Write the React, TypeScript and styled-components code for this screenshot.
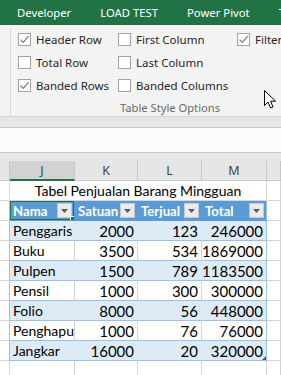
import React from "react";
import styled, { createGlobalStyle, css } from "styled-components";

const GlobalStyle = createGlobalStyle`
  html, body { margin: 0; padding: 0; }
  body {
    width: 281px;
    height: 375px;
    overflow: hidden;
    background: #ffffff;
    font-family: "Noto Sans", "Open Sans", sans-serif;
  }
  #root { position: relative; width: 281px; height: 375px; overflow: hidden; }
`;

const UI_FONT = `"Noto Sans", "Open Sans", sans-serif`;
const CELL_FONT = `Lato, "Liberation Sans", sans-serif`;

/* ---------- Tab bar ---------- */
const TabBar = styled.div`
  height: 25px;
  background: #217346;
  display: flex;
  align-items: center;
  padding-left: 17px;
  gap: 29px;
  white-space: nowrap;
  overflow: hidden;
`;

const Tab = styled.span`
  color: #ffffff;
  font-family: ${UI_FONT};
  font-size: 11.3px;
  line-height: 25px;
`;

/* ---------- Ribbon ---------- */
const Ribbon = styled.div`
  background: #f3f3f3;
  border-bottom: 1px solid #d2d2d2;
  display: flex;
  align-items: stretch;
  padding: 3px 0 0 10px;
  height: 88px;
  overflow: hidden;
`;

const Group = styled.div`
  width: 318px;
  flex: none;
  border-left: 1px solid #d6d6d6;
  margin-bottom: 1px;
  display: flex;
  flex-direction: column;
`;

const OptionGrid = styled.div`
  display: grid;
  grid-template-columns: 100px 119px 90px;
  grid-auto-rows: 23px;
  padding-left: 7px;
`;

const Option = styled.label`
  display: flex;
  align-items: center;
  gap: 5px;
  font-family: ${UI_FONT};
  font-size: 11.5px;
  color: #262626;
  white-space: nowrap;
`;

const Box = styled.span`
  width: 11px;
  height: 11px;
  border: 1px solid #a3a3a3;
  background: #ffffff;
  display: inline-flex;
  align-items: center;
  justify-content: center;
  flex: none;
`;

const GroupLabel = styled.div`
  margin-top: auto;
  text-align: center;
  font-family: ${UI_FONT};
  font-size: 11.2px;
  color: #6a6a6a;
  line-height: 15px;
`;

const Check = () => (
  <svg width="11" height="11" viewBox="0 0 11 11">
    <path d="M1.5 5.6 L4.3 8.4 L9.6 2.2" fill="none" stroke="#7a7a7a" strokeWidth="1.3" />
  </svg>
);

const CheckOption: React.FC<{ label: string; checked?: boolean }> = ({ label, checked }) => (
  <Option>
    <Box>{checked && <Check />}</Box>
    {label}
  </Option>
);

/* ---------- Below-ribbon bars ---------- */
const Band = styled.div`
  height: 10px;
  background: #e6e6e6;
  border-bottom: 1px solid #c6c6c6;
`;

const FormulaBar = styled.div`
  height: 24px;
  background: #fcfcfc;
  border-bottom: 1px solid #c6c6c6;
`;

const Gap = styled.div`
  height: 8px;
  background: #e6e6e6;
`;

/* ---------- Sheet ---------- */
const COLS = "10px 65px 63px 64px 65px 1fr";

const Row = styled.div`
  display: grid;
  grid-template-columns: ${COLS};
  height: 20px;
`;

const ColHead = styled.div<{ $selected?: boolean }>`
  box-sizing: border-box;
  height: 20px;
  background: ${(p) => (p.$selected ? "#d2d2d2" : "#e6e6e6")};
  border-right: 1px solid #c6c6c6;
  border-bottom: ${(p) => (p.$selected ? "2px solid #217346" : "1px solid #c6c6c6")};
  color: ${(p) => (p.$selected ? "#1e5e38" : "#444444")};
  font-family: ${UI_FONT};
  font-size: 12.5px;
  display: flex;
  align-items: center;
  justify-content: center;
`;

type Kind = "plain" | "band" | "white" | "head";

const Cell = styled.div<{ $kind?: Kind; $num?: boolean; $edge?: boolean }>`
  box-sizing: border-box;
  height: 20px;
  position: relative;
  font-family: ${CELL_FONT};
  font-size: ${(p) => (p.$num ? "15px" : "14px")};
  color: #000000;
  padding: 0 3px;
  display: flex;
  align-items: center;
  white-space: nowrap;
  overflow: hidden;
  border-right: 1px solid #d4d4d4;
  border-bottom: 1px solid #d4d4d4;
  justify-content: ${(p) => (p.$num ? "flex-end" : "flex-start")};

  ${(p) =>
    p.$kind === "band" &&
    css`
      background: #ddebf7;
      border-right-color: #ddebf7;
      border-bottom-color: #9bc2e6;
    `}
  ${(p) =>
    p.$kind === "white" &&
    css`
      border-bottom-color: #9bc2e6;
    `}
  ${(p) =>
    p.$kind === "head" &&
    css`
      background: #5b9bd5;
      border-right-color: #5b9bd5;
      border-bottom-color: #5b9bd5;
      color: #ffffff;
      font-weight: 700;
      font-size: 13.2px;
      justify-content: space-between;
      padding: 0 2px 0 3px;
    `}
  ${(p) =>
    p.$edge &&
    css`
      border-right-color: #9bc2e6;
    `}
`;

const Merged = styled(Cell)`
  grid-column: span 4;
  justify-content: center;
`;

const Selected = styled.div`
  position: absolute;
  left: -1px;
  top: -1px;
  right: -1px;
  bottom: -1px;
  border: 2px solid #217346;
  pointer-events: none;
  &::after {
    content: "";
    position: absolute;
    right: -4px;
    bottom: -4px;
    width: 5px;
    height: 5px;
    background: #217346;
    border: 1px solid #ffffff;
  }
`;

const Drop = styled.span`
  width: 13px;
  height: 13px;
  flex: none;
  margin-left: 2px;
  background: #ececec;
  border: 1px solid #c9c9c9;
  display: inline-flex;
  align-items: center;
  justify-content: center;
`;

const Caret = () => (
  <svg width="7" height="4" viewBox="0 0 7 4">
    <path d="M0 0 L7 0 L3.5 4 Z" fill="#595959" />
  </svg>
);

const ResizeMark = styled.span`
  position: absolute;
  right: 0;
  bottom: 0;
  width: 0;
  height: 0;
  border-left: 4px solid transparent;
  border-bottom: 4px solid #3a56a8;
`;

const Cursor = styled.svg`
  position: absolute;
  left: 264px;
  top: 90px;
`;

const data: [string, number, number, number][] = [
  ["Penggaris", 2000, 123, 246000],
  ["Buku", 3500, 534, 1869000],
  ["Pulpen", 1500, 789, 1183500],
  ["Pensil", 1000, 300, 300000],
  ["Folio", 8000, 56, 448000],
  ["Penghapus", 1000, 76, 76000],
  ["Jangkar", 16000, 20, 320000],
];

const headers = ["Nama", "Satuan", "Terjual", "Total"];

export default function App() {
  return (
    <>
      <GlobalStyle />
      <TabBar>
        <Tab>Developer</Tab>
        <Tab>LOAD TEST</Tab>
        <Tab>Power Pivot</Tab>
        <Tab>Team</Tab>
      </TabBar>
      <Ribbon>
        <Group>
          <OptionGrid>
            <CheckOption label="Header Row" checked />
            <CheckOption label="First Column" />
            <CheckOption label="Filter Button" checked />
            <CheckOption label="Total Row" />
            <CheckOption label="Last Column" />
            <span />
            <CheckOption label="Banded Rows" checked />
            <CheckOption label="Banded Columns" />
            <span />
          </OptionGrid>
          <GroupLabel>Table Style Options</GroupLabel>
        </Group>
      </Ribbon>
      <Band />
      <FormulaBar />
      <Gap />
      <Row>
        <ColHead />
        <ColHead $selected>J</ColHead>
        <ColHead>K</ColHead>
        <ColHead>L</ColHead>
        <ColHead>M</ColHead>
        <ColHead />
      </Row>
      <Row>
        <Cell />
        <Merged>Tabel Penjualan Barang Mingguan</Merged>
        <Cell />
      </Row>
      <Row>
        <Cell $edge />
        {headers.map((h, i) => (
          <Cell key={h} $kind="head" $edge={i === 3}>
            {h}
            <Drop>
              <Caret />
            </Drop>
            {i === 0 && <Selected />}
          </Cell>
        ))}
        <Cell />
      </Row>
      {data.map((r, ri) => {
        const kind: Kind = ri % 2 === 0 ? "band" : "white";
        return (
          <Row key={r[0]}>
            <Cell $edge />
            <Cell $kind={kind}>{r[0]}</Cell>
            <Cell $kind={kind} $num>{r[1]}</Cell>
            <Cell $kind={kind} $num>{r[2]}</Cell>
            <Cell $kind={kind} $num $edge>
              {r[3]}
              {ri === data.length - 1 && <ResizeMark />}
            </Cell>
            <Cell />
          </Row>
        );
      })}
      <Row>
        <Cell />
        <Cell />
        <Cell />
        <Cell />
        <Cell />
        <Cell />
      </Row>
      <Cursor width="13" height="19" viewBox="0 0 13 19">
        <path
          d="M0.5 0.5 L0.5 15.5 L4 12 L6.5 18 L9 17 L6.6 11.2 L11.5 11.2 Z"
          fill="#ffffff"
          stroke="#000000"
          strokeWidth="1"
          strokeLinejoin="miter"
        />
      </Cursor>
    </>
  );
}
